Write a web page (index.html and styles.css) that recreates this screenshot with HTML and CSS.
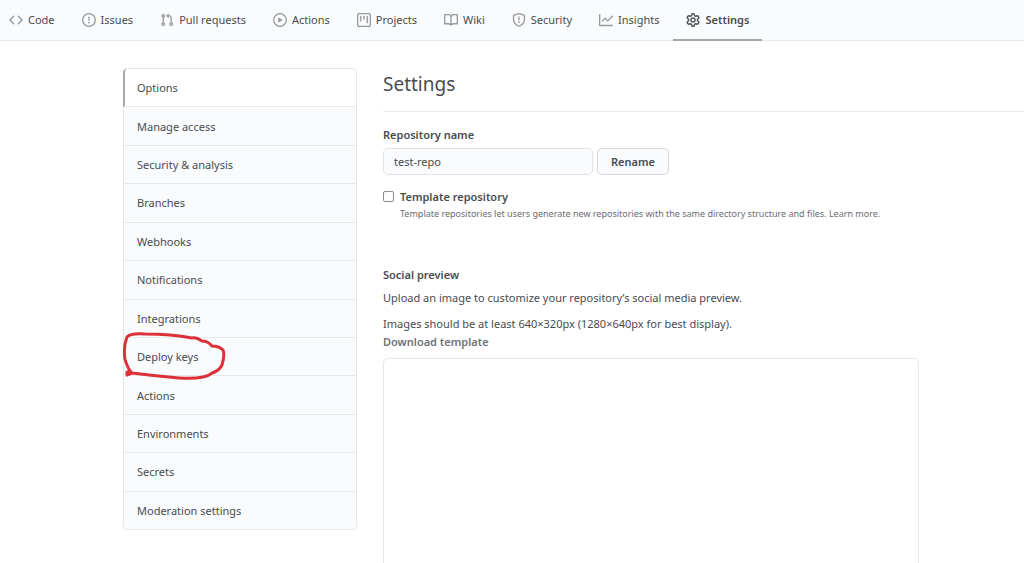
FILE: index.html
```html
<!DOCTYPE html>
<html lang="en">
<head>
<meta charset="utf-8">
<title>Settings - test-repo</title>
<link rel="stylesheet" href="styles.css">
</head>
<body>
<nav class="tabs" aria-label="Repository">
  <a class="tab" href="#"><svg class="icon" viewBox="0 0 16 16"><path d="M4.72 3.22a.75.75 0 011.06 1.06L2.06 8l3.72 3.72a.75.75 0 11-1.06 1.06L.47 8.53a.75.75 0 010-1.06l4.25-4.25zm6.56 0a.75.75 0 10-1.06 1.06L13.94 8l-3.72 3.72a.75.75 0 101.06 1.06l4.25-4.25a.75.75 0 000-1.06l-4.25-4.25z"/></svg>Code</a>
  <a class="tab" href="#"><svg class="icon" viewBox="0 0 16 16"><path fill-rule="evenodd" d="M8 1.5a6.5 6.5 0 100 13 6.5 6.5 0 000-13zM0 8a8 8 0 1116 0A8 8 0 010 8zm9 3a1 1 0 11-2 0 1 1 0 012 0zm-.25-6.25a.75.75 0 00-1.5 0v3.5a.75.75 0 001.5 0v-3.5z"/></svg>Issues</a>
  <a class="tab" href="#"><svg class="icon" viewBox="0 0 16 16"><path fill-rule="evenodd" d="M7.177 3.073L9.573.677A.25.25 0 0110 .854v4.792a.25.25 0 01-.427.177L7.177 3.427a.25.25 0 010-.354zM3.75 2.5a.75.75 0 100 1.5.75.75 0 000-1.5zm-2.25.75a2.25 2.25 0 113 2.122v5.256a2.251 2.251 0 11-1.5 0V5.372A2.25 2.25 0 011.5 3.25zM11 2.5h-1V4h1a1 1 0 011 1v5.628a2.251 2.251 0 101.5 0V5A2.5 2.5 0 0011 2.5zm1 10.25a.75.75 0 111.5 0 .75.75 0 01-1.5 0zM3.75 12a.75.75 0 100 1.5.75.75 0 000-1.5z"/></svg>Pull requests</a>
  <a class="tab" href="#"><svg class="icon" viewBox="0 0 16 16"><path fill-rule="evenodd" d="M1.5 8a6.5 6.5 0 1113 0 6.5 6.5 0 01-13 0zM8 0a8 8 0 100 16A8 8 0 008 0zM6.379 5.227A.25.25 0 006 5.442v5.117a.25.25 0 00.379.214l4.264-2.559a.25.25 0 000-.428L6.379 5.227z"/></svg>Actions</a>
  <a class="tab" href="#"><svg class="icon" viewBox="0 0 16 16"><path fill-rule="evenodd" d="M1.75 0A1.75 1.75 0 000 1.75v12.5C0 15.216.784 16 1.75 16h12.5A1.75 1.75 0 0016 14.25V1.75A1.75 1.75 0 0014.25 0H1.75zM1.5 1.75a.25.25 0 01.25-.25h12.5a.25.25 0 01.25.25v12.5a.25.25 0 01-.25.25H1.75a.25.25 0 01-.25-.25V1.75zM11.75 3a.75.75 0 00-.75.75v7.5a.75.75 0 001.5 0v-7.5a.75.75 0 00-.75-.75zm-8.25.75a.75.75 0 011.5 0v5.5a.75.75 0 01-1.5 0v-5.5zM8 3a.75.75 0 00-.75.75v3.5a.75.75 0 001.5 0v-3.5A.75.75 0 008 3z"/></svg>Projects</a>
  <a class="tab" href="#"><svg class="icon" viewBox="0 0 16 16"><path fill-rule="evenodd" d="M0 1.75A.75.75 0 01.75 1h4.253c1.227 0 2.317.59 3 1.501A3.744 3.744 0 0111.006 1h4.245a.75.75 0 01.75.75v10.5a.75.75 0 01-.75.75h-4.507a2.25 2.25 0 00-1.591.659l-.622.621a.75.75 0 01-1.06 0l-.622-.621A2.25 2.25 0 005.258 13H.75a.75.75 0 01-.75-.75V1.75zm8.755 3a2.25 2.25 0 012.25-2.25H14.5v9h-3.757c-.71 0-1.4.201-1.992.572l.004-7.322zm-1.504 7.324l.004-5.073-.002-2.253A2.25 2.25 0 005.003 2.5H1.5v9h3.757a3.75 3.75 0 011.994.574z"/></svg>Wiki</a>
  <a class="tab" href="#"><svg class="icon" viewBox="0 0 16 16"><path fill-rule="evenodd" d="M7.467.133a1.75 1.75 0 011.066 0l5.25 1.68A1.75 1.75 0 0115 3.48V7c0 1.566-.32 3.182-1.303 4.682-.983 1.498-2.585 2.813-5.032 3.855a1.7 1.7 0 01-1.33 0c-2.447-1.042-4.049-2.357-5.032-3.855C1.32 10.182 1 8.566 1 7V3.48a1.75 1.75 0 011.217-1.667l5.25-1.68zm.61 1.429a.25.25 0 00-.153 0l-5.25 1.68a.25.25 0 00-.174.238V7c0 1.358.275 2.666 1.057 3.86.784 1.194 2.121 2.34 4.366 3.297a.2.2 0 00.154 0c2.245-.956 3.582-2.104 4.366-3.298C13.225 9.666 13.5 8.36 13.5 7V3.48a.25.25 0 00-.174-.237l-5.25-1.68zM9 10.5a1 1 0 11-2 0 1 1 0 012 0zm-.25-5.75a.75.75 0 10-1.5 0v3a.75.75 0 001.5 0v-3z"/></svg>Security</a>
  <a class="tab" href="#"><svg class="icon" viewBox="0 0 16 16"><path fill-rule="evenodd" d="M1.5 1.75a.75.75 0 00-1.5 0v12.5c0 .414.336.75.75.75h14.5a.75.75 0 000-1.5H1.5V1.75zm14.28 2.53a.75.75 0 00-1.06-1.06L10 7.94 7.53 5.47a.75.75 0 00-1.06 0L3.22 8.72a.75.75 0 001.06 1.06L7 7.06l2.47 2.47a.75.75 0 001.06 0l5.25-5.25z"/></svg>Insights</a>
  <a class="tab tab-current" href="#" aria-current="page"><svg class="icon" viewBox="0 0 16 16" fill="none" stroke="currentColor" stroke-width="1.7" stroke-linejoin="round"><path d="M6.7 1.1 Q8 .4 9.3 1.1 L9.7 3 L10.9 3.7 L12.9 3.1 Q14.6 3.9 14.7 5.4 L13.1 7.2 V8.8 L14.7 10.6 Q14.6 12.1 12.9 12.9 L10.9 12.3 L9.7 13 L9.3 14.9 Q8 15.6 6.7 14.9 L6.3 13 L5.1 12.3 L3.1 12.9 Q1.4 12.1 1.3 10.6 L2.9 8.8 V7.2 L1.3 5.4 Q1.4 3.9 3.1 3.1 L5.1 3.7 L6.3 3 Z"/><circle cx="8" cy="8" r="2.3"/></svg>Settings</a>
</nav>
<div class="layout">
  <nav class="menu" aria-label="Settings">
    <a class="menu-item menu-current" href="#" aria-current="page">Options</a>
    <a class="menu-item" href="#">Manage access</a>
    <a class="menu-item" href="#">Security &amp; analysis</a>
    <a class="menu-item" href="#">Branches</a>
    <a class="menu-item" href="#">Webhooks</a>
    <a class="menu-item" href="#">Notifications</a>
    <a class="menu-item" href="#">Integrations</a>
    <a class="menu-item marked" href="#">Deploy keys<svg class="scribble" viewBox="0 0 106 50" aria-hidden="true"><path d="M6 43 L11 41 Q35 44 58 46 Q73 47 82 45 Q88 44 91 41 Q98 39 101 33 Q104 23 102 18 Q98 14 91 14 Q87 9 81 9 Q75 5 71 6 Q51 2 24 2 Q9 1 6 5 Q2 15 4 27 Q6 35 10 40 L6 40 Z"/></svg></a>
    <a class="menu-item" href="#">Actions</a>
    <a class="menu-item" href="#">Environments</a>
    <a class="menu-item" href="#">Secrets</a>
    <a class="menu-item" href="#">Moderation settings</a>
  </nav>
  <main class="content">
    <h1 class="title">Settings</h1>
    <form class="rename">
      <label class="label" for="repo-name">Repository name</label>
      <div class="rename-row">
        <input class="field" id="repo-name" type="text" value="test-repo">
        <button class="button" type="button">Rename</button>
      </div>
    </form>
    <div class="option">
      <input class="check" id="template" type="checkbox">
      <div class="option-text">
        <label class="label" for="template">Template repository</label>
        <p class="note">Template repositories let users generate new repositories with the same directory structure and files. <a class="note-link" href="#">Learn more.</a></p>
      </div>
    </div>
    <section class="social">
      <h2 class="label">Social preview</h2>
      <p class="text">Upload an image to customize your repository’s social media preview.</p>
      <p class="text">Images should be at least 640×320px (1280×640px for best display).<br><a class="download" href="#">Download template</a></p>
      <div class="preview"></div>
    </section>
  </main>
</div>
</body>
</html>
```
FILE: styles.css
```css
* { box-sizing: border-box; }

body {
  margin: 0;
  background: #fff;
  color: #484b50;
  font: 11px/18px "Noto Sans", "Open Sans", sans-serif;
  overflow-x: hidden;
}

h1, h2, p { margin: 0; }
a { color: inherit; text-decoration: none; }

.tabs {
  display: flex;
  gap: 1px;
  padding-left: 9px;
  background: #fafbfc;
  border-bottom: 1px solid #e6e8ea;
}

.tab {
  display: flex;
  align-items: center;
  gap: 5px;
  height: 41px;
  margin-bottom: -1px;
  padding: 1px 13px 0;
  border-bottom: 2px solid transparent;
  white-space: nowrap;
}

.tab:first-child { padding-left: 0; }

.tab-current {
  border-bottom-color: #a5a6aa;
  font-weight: 600;
}

.icon {
  flex: none;
  width: 14px;
  height: 14px;
  fill: #98999d;
}

.tab-current .icon {
  fill: none;
  color: #55575c;
}

.layout {
  display: flex;
  align-items: flex-start;
  gap: 26px;
  padding: 27px 0 0 123px;
}

.menu {
  display: flex;
  flex: none;
  flex-direction: column;
  width: 234px;
  min-height: 462px;
  border: 1px solid #e6e7ea;
  border-radius: 4px;
  background: #fafbfc;
}

.menu-item {
  display: flex;
  flex: 1 0 auto;
  align-items: center;
  padding: 1px 13px 0;
  border-bottom: 1px solid #e8eaec;
}

.menu-item:last-child { border-bottom: 0; }

.menu-current {
  margin-left: -1px;
  border-left: 2px solid #a9a7ad;
  padding-left: 12px;
  background: #fff;
  border-radius: 4px 4px 0 0;
}

.marked { position: relative; }

.scribble {
  position: absolute;
  left: -3px;
  top: -6px;
  width: 106px;
  height: 50px;
  fill: none;
  stroke: #dc3138;
  stroke-width: 3;
  stroke-linecap: round;
  stroke-linejoin: round;
}

.content {
  flex: 1;
  min-width: 0;
}

.title {
  padding-bottom: 11px;
  border-bottom: 1px solid #e8eaec;
  font-size: 19px;
  font-weight: 400;
  line-height: 32px;
}

.label {
  display: block;
  font-size: 11px;
  font-weight: 600;
  line-height: 18px;
}

.rename { padding-top: 14px; }

.rename-row {
  display: flex;
  gap: 4px;
  padding-top: 4px;
}

.field, .button {
  height: 27px;
  border: 1px solid #e1e3e6;
  border-radius: 5px;
  background: #fafbfc;
  color: inherit;
  font: inherit;
}

.field {
  width: 210px;
  padding: 0 10px;
}

.button {
  padding: 0 13px;
  border-color: #d5d6da;
  font-weight: 600;
}

.option {
  display: flex;
  gap: 6px;
  padding-top: 13px;
}

.check {
  appearance: none;
  width: 11px;
  height: 11px;
  margin: 3px 0 0;
  border: 1px solid #8b8b8f;
  border-radius: 2px;
  background: #fff;
}

.note {
  color: #6b6d72;
  font-size: 9px;
  line-height: 15px;
}

.social { padding-top: 45px; }

.text {
  padding-top: 5px;
}

.text + .text { padding-top: 8px; }

.download {
  color: #707277;
  font-weight: 600;
}

.preview {
  width: 536px;
  max-width: 100%;
  height: 268px;
  margin-top: 7px;
  border: 1px solid #e6e7ea;
  border-radius: 5px;
}
```
